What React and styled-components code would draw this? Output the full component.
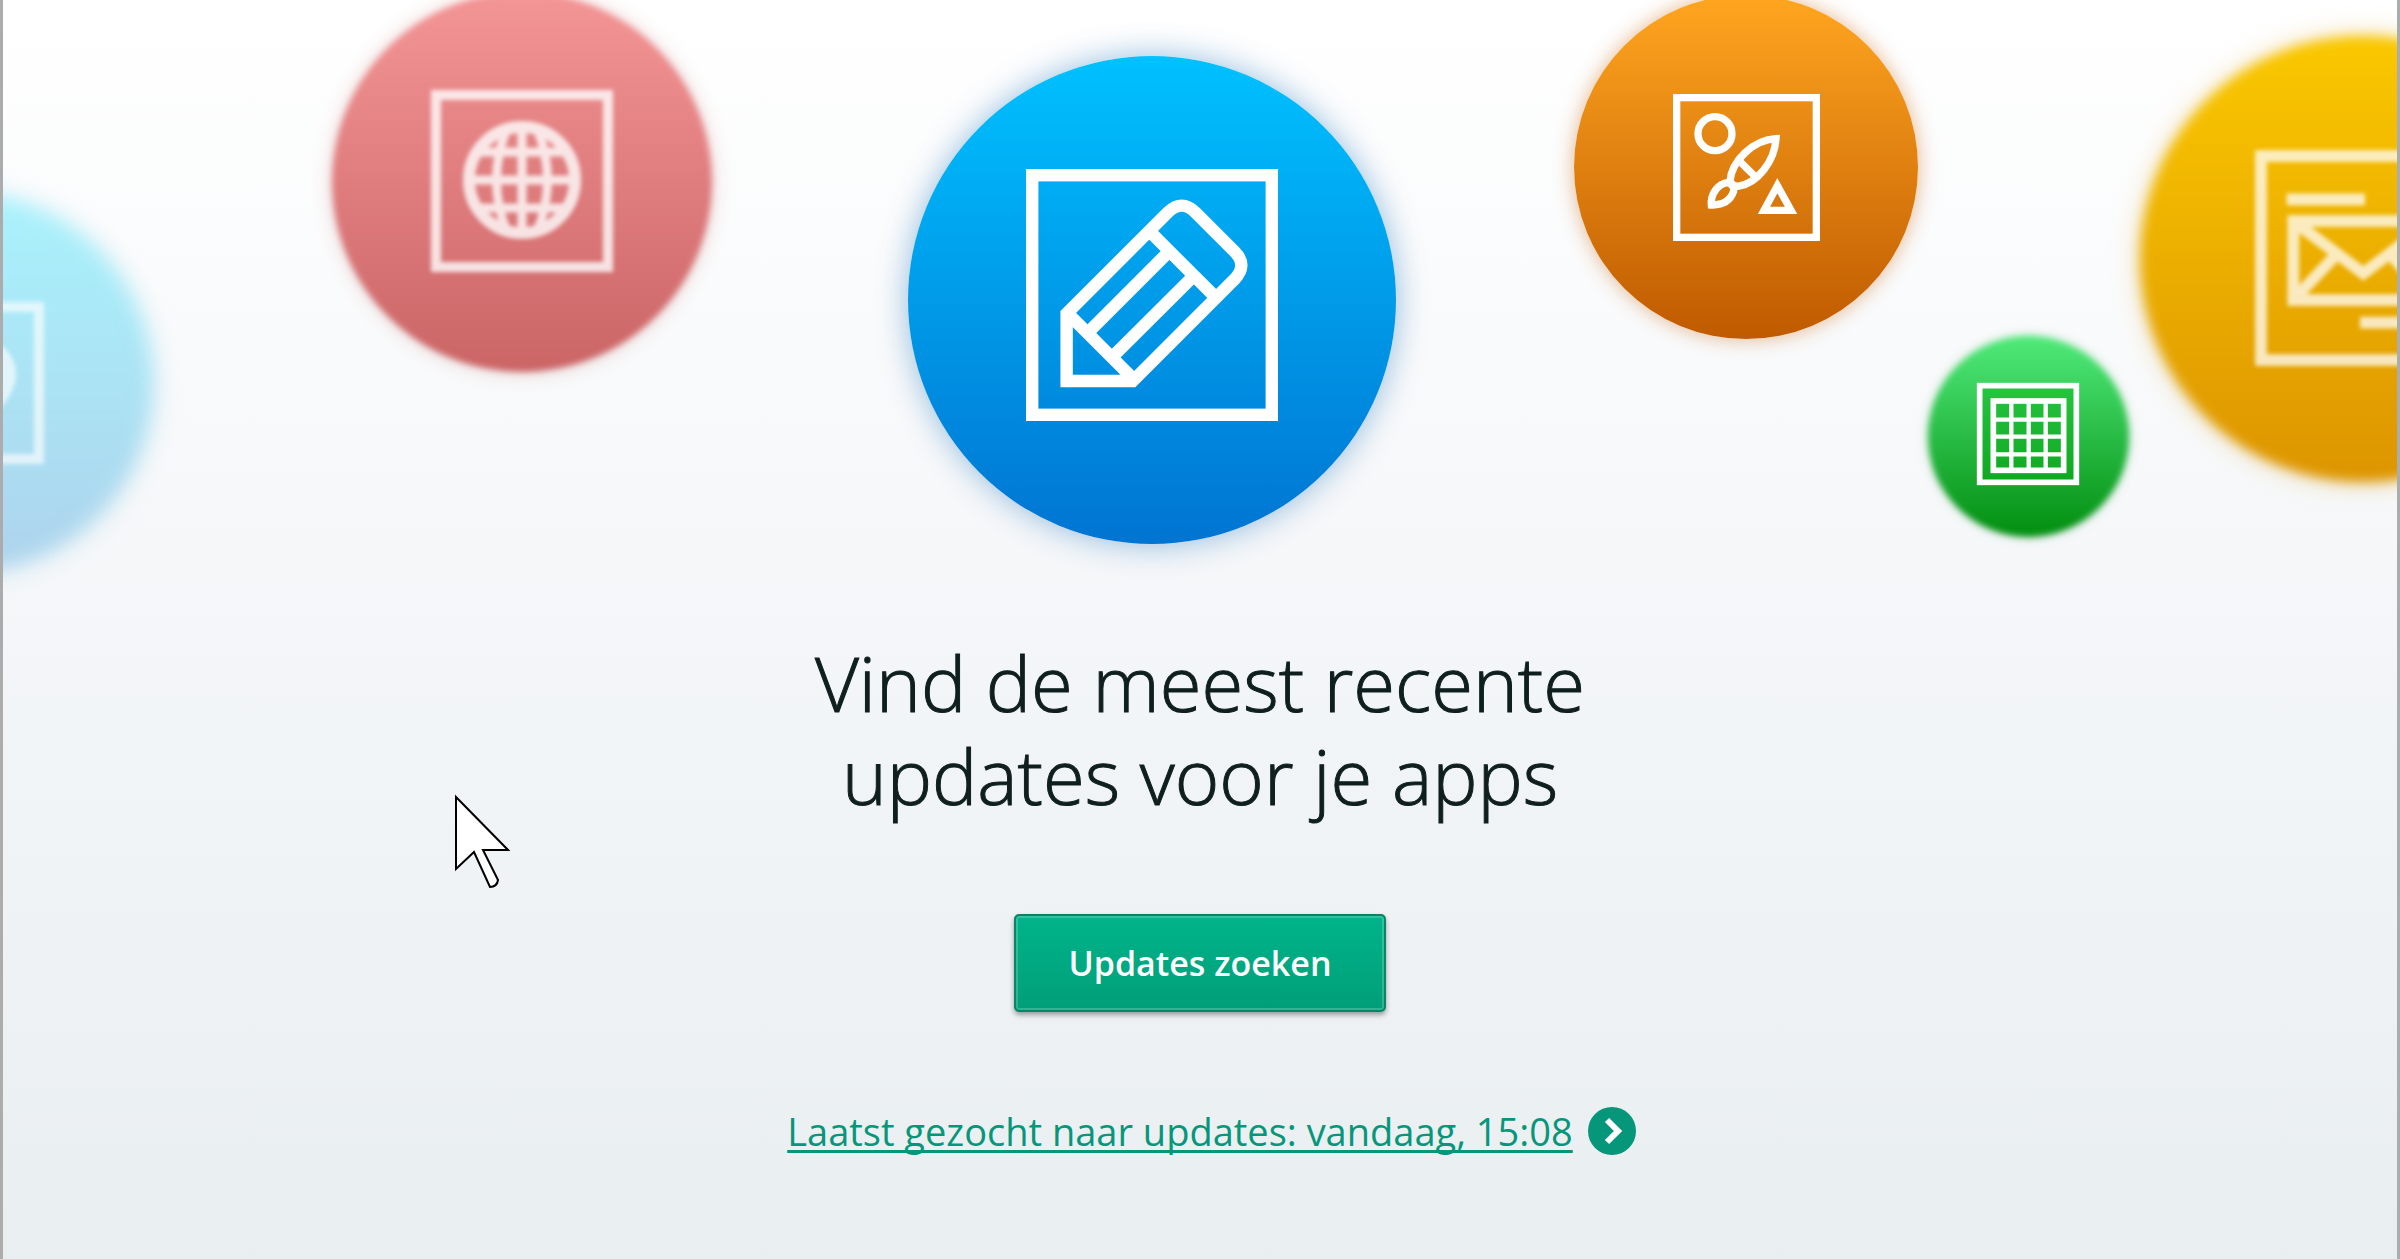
import React from 'react';
import styled, { createGlobalStyle } from 'styled-components';

const GlobalStyle = createGlobalStyle`
  * {
    box-sizing: border-box;
  }

  body {
    margin: 0;
    font-family: "Open Sans", "Noto Sans", sans-serif;
  }
`

const Page = styled.main`
  position: relative;
  display: flex;
  flex-direction: column;
  align-items: center;
  min-height: 100vh;
  overflow: hidden;
  border-left: 3px solid #acacac;
  border-right: 3px solid #a9adae;
  background: linear-gradient(#ffffff 0%, #f5f7f9 45%, #eff3f5 70%, #e9eef1 100%);
`

const Hero = styled.div`
  position: relative;
  align-self: stretch;
  height: 636px;
`

/* x is the distance of the bubble's centre from the middle of the page */
const Bubble = styled.div`
  position: absolute;
  left: calc(50% + ${props => props.$x - props.$size / 2}px);
  top: ${props => props.$y - props.$size / 2}px;
  display: flex;
  align-items: center;
  justify-content: center;
  width: ${props => props.$size}px;
  height: ${props => props.$size}px;

  &::before {
    content: "";
    position: absolute;
    inset: 0;
    border-radius: 50%;
    background: linear-gradient(${props => props.$from}, ${props => props.$to});
    box-shadow: 0 0 ${props => props.$glow};
    filter: blur(${props => props.$blur || 0}px);
  }
`

const Icon = styled.svg`
  position: relative;
  width: ${props => props.$size}px;
  height: ${props => props.$size}px;
  margin-bottom: ${props => props.$lift || 0}px;
  overflow: visible;
  fill: none;
  stroke: #ffffff;
  opacity: ${props => props.$opacity || 1};
  filter: blur(${props => props.$blur || 0}px);
`

const Title = styled.h1`
  margin: 0;
  font-size: 76px;
  font-weight: 300;
  line-height: 93px;
  text-align: center;
  color: #0f1e1e;
  -webkit-text-stroke: 1px #0f1e1e;
`

const SearchButton = styled.button`
  margin-top: 92px;
  padding: 0 52px;
  height: 98px;
  border: 2px solid #078564;
  border-radius: 5px;
  background: linear-gradient(#00b48a, #009e78);
  box-shadow: inset 0 0 0 2px rgba(255, 255, 255, 0.2), 0 3px 5px rgba(0, 0, 0, 0.35);
  color: #ffffff;
  font-family: inherit;
  font-size: 34px;
  font-weight: 600;
  line-height: 52px;
  cursor: pointer;
`

const LastCheck = styled.a`
  display: flex;
  align-items: center;
  gap: 14px;
  margin-top: 94px;
  padding-left: 24px;
  color: #06967a;
  font-size: 38px;
  line-height: 50px;
  text-decoration: none;

  span {
    text-decoration: underline;
    text-decoration-thickness: 3px;
    text-underline-offset: 4px;
    text-decoration-skip-ink: none;
  }

  svg {
    flex: none;
    width: 50px;
    height: 50px;
  }
`

const Cursor = styled.svg`
  position: absolute;
  left: calc(50% - 748px);
  top: 793px;
  width: 62px;
  height: 100px;
`

const PinBubble = () => (
  <Bubble $x={-1237} $y={383} $size={380} $from="#a9f2fc" $to="#add3ec" $glow="20px #d5edf6" $blur={10}>
    <Icon viewBox="0 0 162 162" $size={162} $opacity={0.65} $blur={2}>
      <rect x="5" y="5" width="152" height="152" strokeWidth="10" />
      <path d="M96 36 C120 36 134 54 134 72 C134 96 112 112 96 132 C80 112 60 96 60 72 C60 54 72 36 96 36Z" fill="#ffffff" stroke="none" />
    </Icon>
  </Bubble>
)

const GlobeBubble = () => (
  <Bubble $x={-678} $y={182} $size={380} $from="#f49596" $to="#cb6566" $glow="18px rgba(190, 90, 80, 0.3)" $blur={3}>
    <Icon viewBox="0 0 184 184" $size={184} $lift={3} $opacity={0.8} $blur={2}>
      <rect x="6" y="6" width="172" height="172" strokeWidth="10" />
      <g strokeWidth="9">
        <circle cx="92" cy="91" r="53" strokeWidth="12" />
        <path d="M92 37V145M38 91H146M44 63H140M44 119H140" />
        <path d="M77 39Q56 91 77 143M107 39Q128 91 107 143" />
      </g>
    </Icon>
  </Bubble>
)

const PencilBubble = () => (
  <Bubble $x={-48} $y={300} $size={488} $from="#00c1ff" $to="#0074d2" $glow="32px rgba(0, 100, 180, 0.42)">
    <Icon viewBox="0 0 732 732" $size={252} $lift={10} strokeWidth="36">
      <rect x="18" y="18" width="696" height="696" />
      <path d="M118 616V420L412 126Q453 87 492 126L606 240Q645 279 606 320L310 616Z" />
      <path d="M358 180L552 374M120 418L314 612M180 475L416 239M251 546L488 310" />
    </Icon>
  </Bubble>
)

const BrushBubble = () => (
  <Bubble $x={546} $y={167} $size={344} $from="#ffa620" $to="#bf5a00" $glow="20px rgba(200, 95, 0, 0.45)">
    <Icon viewBox="0 0 441 441" $size={147} strokeWidth="22">
      <rect x="11" y="11" width="419" height="419" />
      <circle cx="126" cy="119" r="51" />
      <path d="M309 134C240 138 176 200 171 262Q178 276 195 277C255 268 305 200 309 134Z" />
      <path d="M198 200L251 252" />
      <path d="M115 333C112 300 135 268 165 266Q184 272 182 292C172 320 148 334 115 333Z" />
      <path d="M313 275L273 349H354Z" />
    </Icon>
  </Bubble>
)

const GridBubble = () => (
  <Bubble $x={828} $y={436} $size={201} $from="#50ea7a" $to="#028e10" $glow="8px rgba(20, 160, 50, 0.35)" $blur={3}>
    <Icon viewBox="0 0 306 306" $size={102} $lift={5} strokeWidth="17">
      <rect x="8" y="8" width="290" height="290" fill="rgba(0, 170, 10, 0.35)" />
      <rect x="49" y="54" width="211" height="208" />
      <path d="M103 54V262M155 54V262M206 54V262M49 110H260M49 161H260M49 214H260" strokeWidth="13" />
    </Icon>
  </Bubble>
)

const MailBubble = () => (
  <Bubble $x={1163} $y={259} $size={446} $from="#fac800" $to="#dd9500" $glow="24px rgba(225, 160, 20, 0.4)" $blur={6}>
    <Icon viewBox="0 0 648 648" $size={216} $lift={3} $opacity={0.75} $blur={2} strokeWidth="35">
      <rect x="18" y="18" width="612" height="612" />
      <path d="M95 148H330M315 518H553" />
      <rect x="115" y="213" width="418" height="237" />
      <path d="M115 213L325 370L533 213M115 450L240 318M533 450L410 318" />
    </Icon>
  </Bubble>
)

export default function App() {
  return (
    <>
      <GlobalStyle />
      <Page>
        <Hero aria-hidden="true">
          <PinBubble />
          <GlobeBubble />
          <PencilBubble />
          <BrushBubble />
          <MailBubble />
          <GridBubble />
        </Hero>
        <Title>
          Vind de meest recente<br />
          updates voor je apps
        </Title>
        <SearchButton type="button">Updates zoeken</SearchButton>
        <LastCheck href="#updates">
          <span>Laatst gezocht naar updates: vandaag, 15:08</span>
          <svg viewBox="0 0 50 50" fill="none">
            <circle cx="25" cy="25" r="24" fill="#06967a" />
            <path d="M20 14L31 25L20 36" stroke="#ffffff" strokeWidth="6" />
          </svg>
        </LastCheck>
        <Cursor viewBox="0 0 62 100" aria-hidden="true">
          <path d="M4 4L56 57H31L46 87Q45 94 38 94L22 59L4 76Z" fill="#ffffff" stroke="#000000" strokeWidth="2" />
        </Cursor>
      </Page>
    </>
  );
}
